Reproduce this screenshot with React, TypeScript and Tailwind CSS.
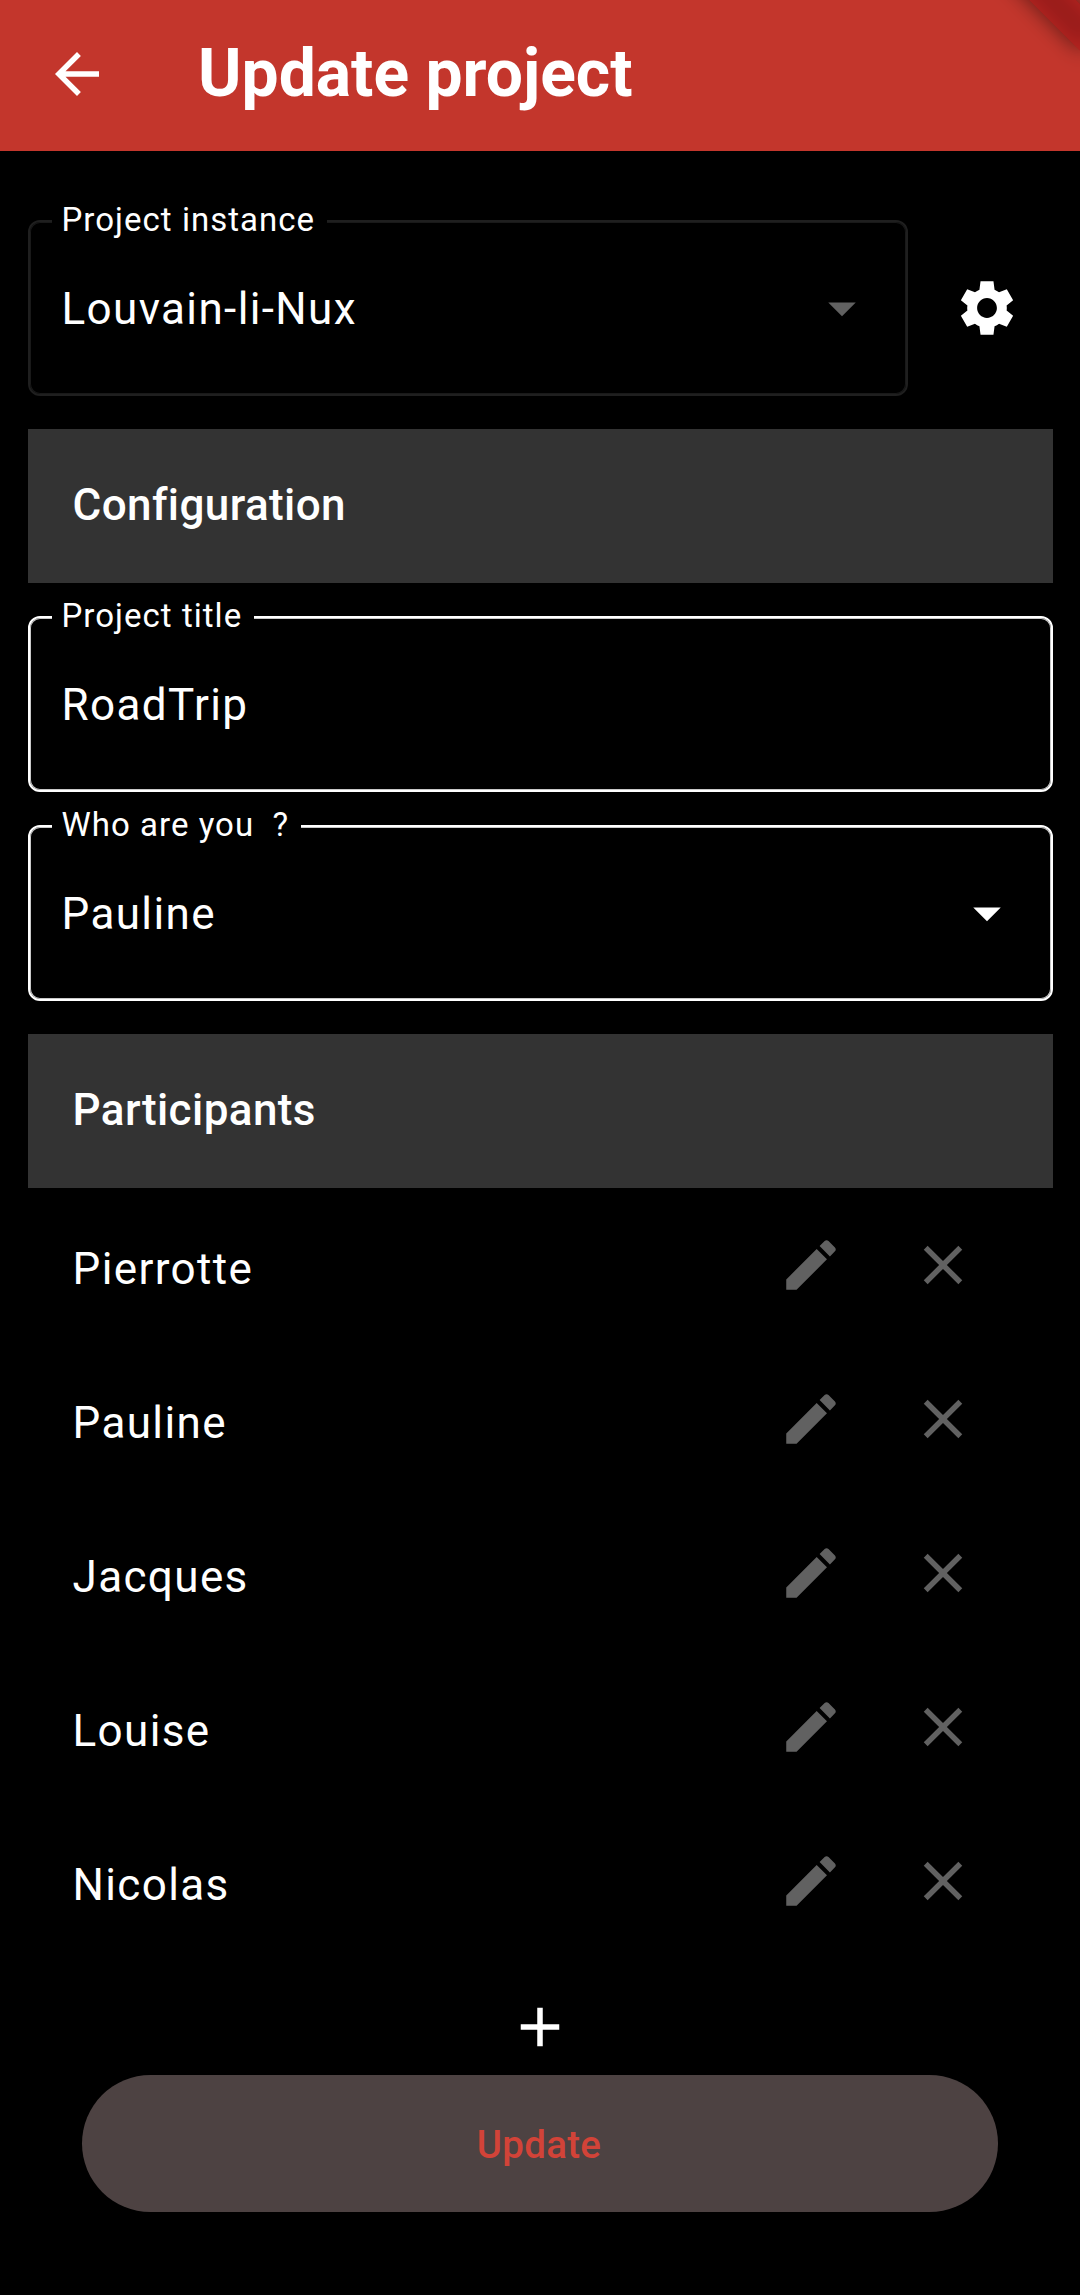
import type { ReactNode } from "react";

const participants = ["Pierrotte", "Pauline", "Jacques", "Louise", "Nicolas"];

const icons = {
  back: "M20 11H7.83l5.59-5.59L12 4l-8 8 8 8 1.41-1.41L7.83 13H20v-2z",
  drop: "M7 10l5 5 5-5z",
  edit: "M3 17.25V21h3.75L17.81 9.94l-3.75-3.75L3 17.25zM20.71 7.04c.39-.39.39-1.02 0-1.41l-2.34-2.34c-.39-.39-1.02-.39-1.41 0l-1.83 1.83 3.75 3.75 1.83-1.83z",
  close: "M19 6.41L17.59 5 12 10.59 6.41 5 5 6.41 10.59 12 5 17.59 6.41 19 12 13.41 17.59 19 19 17.59 13.41 12z",
  add: "M19 13h-6v6h-2v-6H5v-2h6V5h2v6h6v2z",
  settings:
    "M19.14 12.94c.04-.3.06-.61.06-.94 0-.32-.02-.64-.07-.94L21.5 9.2 19.2 5.15 16.37 6.29c-.5-.38-1.03-.7-1.62-.94L14.35 2.3H9.65L9.25 5.35C8.66 5.59 8.12 5.92 7.63 6.29L4.8 5.15 2.5 9.2 4.89 11.06C4.84 11.36 4.8 11.69 4.8 12s.02.64.07.94L2.5 14.8 4.8 18.85 7.63 17.71c.5.38 1.03.7 1.62.94L9.65 21.7h4.7L14.75 18.65c.59-.24 1.13-.56 1.62-.94L19.2 18.85 21.5 14.8zM12 15.6c-1.98 0-3.6-1.62-3.6-3.6s1.62-3.6 3.6-3.6 3.6 1.62 3.6 3.6-1.62 3.6-3.6 3.6z",
};

function Icon({ name }: { name: keyof typeof icons }) {
  return (
    <svg viewBox="0 0 24 24" className="size-[66px] shrink-0 fill-current">
      <path d={icons[name]} />
    </svg>
  );
}

function Field({ label, value, disabled, children }: { label: string; value: string; disabled?: boolean; children?: ReactNode }) {
  return (
    <div
      className={
        "relative flex h-44 grow items-center justify-between rounded-xl border-2 pr-[31px] pl-8 " +
        (disabled
          ? "border-[#1f1f1f] shadow-[inset_0_0_0_1px_#191919]"
          : "border-white shadow-[inset_0_0_0_1px_#c8c8c8]")
      }
    >
      <span className="absolute -top-[22px] left-[22px] bg-black pr-3 pl-[10px] text-[33px] leading-[39px] tracking-[1.03px] whitespace-pre">
        {label}
      </span>
      <span className="pt-[2px] text-[44px] leading-[52px] tracking-[1.375px]">{value}</span>
      {children}
    </div>
  );
}

function Section({ title }: { title: string }) {
  return (
    <h2 className="flex h-[154px] items-center bg-[#333333] pr-11 pb-[2px] pl-[45px] text-[44px] leading-[52px] font-medium tracking-[0.4125px]">
      {title}
    </h2>
  );
}

export default function App() {
  return (
    <div className="h-[2295px] w-[1080px] overflow-hidden bg-black font-[Roboto,sans-serif] text-white">
      <header className="relative flex h-[151px] items-center overflow-hidden bg-[#c3362c] pb-[3px] pl-11">
        <button className="flex">
          <Icon name="back" />
        </button>
        <h1 className="pl-[88px] text-[66px] leading-[78px] font-bold">Update project</h1>
        <div className="absolute top-[-55px] left-[904px] h-[33px] w-[220px] rotate-45">
          <div className="absolute inset-0 bg-black/50 blur-[10.9px]" />
          <div className="absolute inset-0 bg-[#b71c1c]/63" />
        </div>
      </header>
      <main className="px-[27.5px] pt-[69px]">
        <div className="flex">
          <Field label="Project instance" value="Louvain-li-Nux" disabled>
            <span className="flex text-[#616161]">
              <Icon name="drop" />
            </span>
          </Field>
          <button className="ml-[14px] flex w-[131px] items-center justify-center">
            <Icon name="settings" />
          </button>
        </div>
        <div className="mt-[33px] flex flex-col gap-[33px]">
          <Section title="Configuration" />
          <Field label="Project title" value="RoadTrip" />
          <Field label="Who are you  ?" value="Pauline">
            <Icon name="drop" />
          </Field>
          <Section title="Participants" />
        </div>
        <ul>
          {participants.map((name) => (
            <li key={name} className="flex h-[154px] items-center pr-11 pl-[45px]">
              <span className="grow pt-2 text-[44px] leading-[52px] tracking-[1.375px]">{name}</span>
              <button className="flex w-[132px] justify-center text-[#616161]">
                <Icon name="edit" />
              </button>
              <button className="flex w-[132px] justify-center text-[#616161]">
                <Icon name="close" />
              </button>
            </li>
          ))}
        </ul>
        <button className="mx-auto mt-9 flex">
          <Icon name="add" />
        </button>
        <button className="mx-auto mt-[15px] flex h-[137px] w-[916px] items-center justify-center rounded-full bg-[#4d4242] pt-[2px] pr-[2px] text-[38.5px] leading-[46px] font-medium tracking-[0.275px] text-[#d24338]">
          Update
        </button>
      </main>
    </div>
  );
}
